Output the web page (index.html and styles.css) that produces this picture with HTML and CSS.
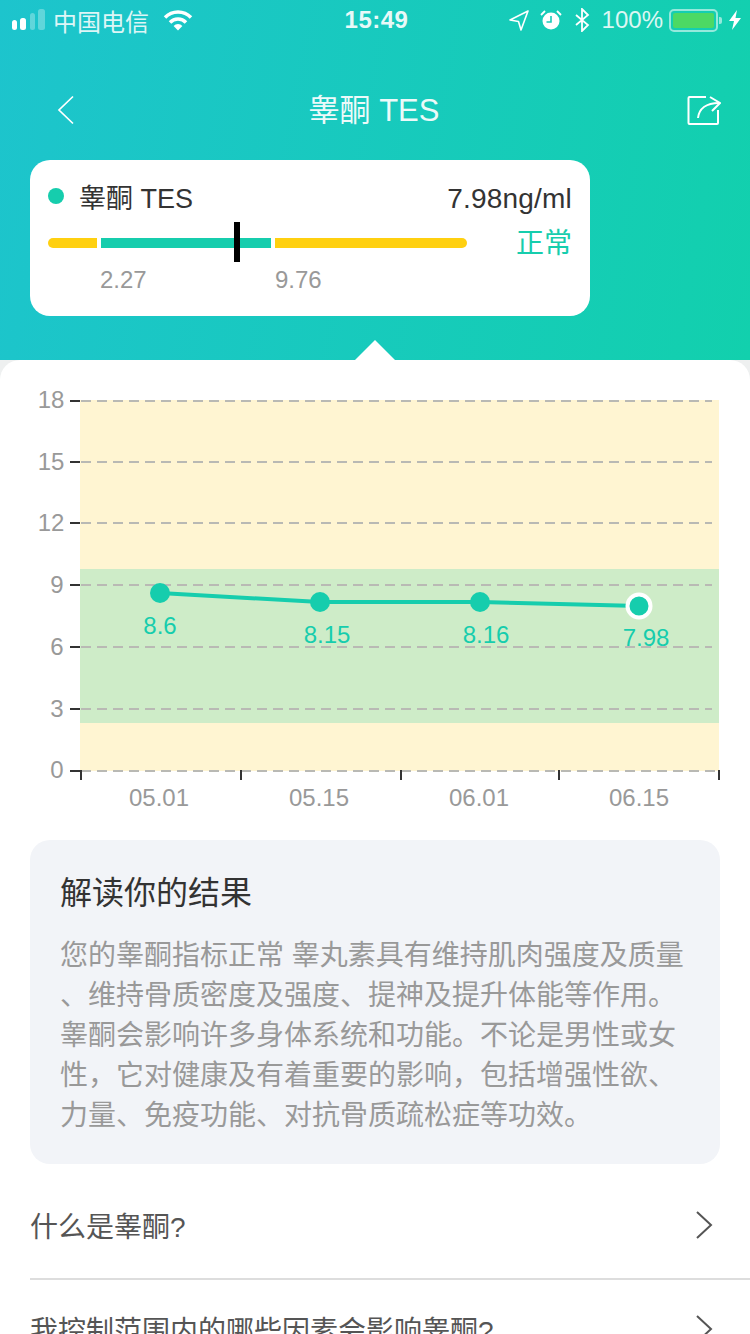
FILE: index.html
```html
<!DOCTYPE html>
<html lang="zh-CN">
<head>
    <meta charset="UTF-8">
    <title>睾酮 TES</title>
    <link rel="stylesheet" href="styles.css">
</head>
<body>
    <div class="page">
        <header class="top">
            <div class="status-bar">
                <div class="status-left">
                    <svg class="signal" width="34" height="24" viewBox="0 0 34 24">
                        <rect x="0" y="12" width="5" height="10" rx="2.5" fill="#fff"/>
                        <rect x="8" y="10" width="6" height="12" rx="2.5" fill="#fff"/>
                        <rect x="18" y="5" width="5" height="17" rx="2.5" fill="#fff" opacity=".3"/>
                        <rect x="26" y="1" width="7" height="21" rx="2.5" fill="#fff" opacity=".3"/>
                    </svg>
                    <span class="carrier">中国电信</span>
                    <svg class="wifi" width="30" height="22" viewBox="0 0 30 22">
                        <path d="M2 8.500a18 18 0 0 1 26 0" fill="none" stroke="#fff" stroke-width="3.4"/>
                        <path d="M7 13.500a11 11 0 0 1 16 0" fill="none" stroke="#fff" stroke-width="3.4"/>
                        <path d="M10.600 17a6 6 0 0 1 8.800 0L15 21.500z" fill="#fff"/>
                    </svg>
                </div>
                <span class="clock">15:49</span>
                <div class="status-right">
                    <svg width="20" height="22" viewBox="0 0 20 22">
                        <path d="M19 2 1 11l8.500 1.500L12 21z" fill="none" stroke="#fff" stroke-width="1.6" stroke-linejoin="round"/>
                    </svg>
                    <svg class="alarm" width="22" height="22" viewBox="0 0 22 22">
                        <circle cx="11" cy="12" r="8.500" fill="#fff"/>
                        <path d="M11 7v6H6.500" fill="none" stroke="#17cbb9" stroke-width="1.6"/>
                        <path d="M1 6l4-4M21 6l-4-4" stroke="#fff" stroke-width="1.8"/>
                    </svg>
                    <svg class="bluetooth" width="16" height="24" viewBox="0 0 16 24">
                        <path d="M2 7l12 10-6 6V1l6 6L2 17" fill="none" stroke="#fff" stroke-width="1.8"/>
                    </svg>
                    <span class="battery-text">100%</span>
                    <div class="battery"><div class="battery-fill"></div></div>
                    <div class="battery-tip"></div>
                    <svg width="12" height="20" viewBox="0 0 12 20">
                        <path d="M8 0 0 11h5l-2 9 9-12H6.500z" fill="#fff"/>
                    </svg>
                </div>
            </div>

            <nav class="nav">
                <svg class="nav-back" width="18" height="30" viewBox="0 0 18 30">
                    <path d="M16 1.500 2 15l14 13.500" fill="none" stroke="#fff" stroke-width="1.7"/>
                </svg>
                <h1 class="nav-title">睾酮 TES</h1>
                <svg class="nav-share" width="34" height="32" viewBox="0 0 34 32">
                    <path d="M19 3H2.500a1 1 0 0 0-1 1v25a1 1 0 0 0 1 1H30a1 1 0 0 0 1-1V16" fill="none" stroke="#fff" stroke-width="2"/>
                    <path d="M11 24c1-9 8-15 21-15" fill="none" stroke="#fff" stroke-width="2"/>
                    <path d="M23 3l10 6-8 8" fill="none" stroke="#fff" stroke-width="2"/>
                </svg>
            </nav>

            <section class="summary">
                <div class="summary-head">
                    <span class="dot"></span>
                    <span class="summary-name">睾酮 TES</span>
                    <span class="summary-value">7.98ng/ml</span>
                </div>
                <div class="summary-range">
                    <div class="range">
                        <div class="range-bar">
                            <span class="seg seg-low"></span>
                            <span class="seg seg-mid"></span>
                            <span class="seg seg-high"></span>
                            <span class="range-mark"></span>
                        </div>
                        <div class="range-labels">
                            <span class="range-low">2.27</span>
                            <span class="range-high">9.76</span>
                        </div>
                    </div>
                    <span class="summary-state">正常</span>
                </div>
            </section>
        </header>

        <main class="sheet">
            <span class="sheet-caret"></span>

            <svg class="chart" width="750" height="440" viewBox="0 380 750 440">
                <!-- bands -->
                <rect x="80" y="400" width="639" height="371" fill="#fff5d2"/>
                <rect x="80" y="569" width="639" height="154" fill="#ceecc8"/>

                <!-- grid -->
                <g stroke="#b9b9b4" stroke-width="2" stroke-dasharray="10 6">
                    <path d="M81 401H712M81 462H712M81 523H712M81 585H712M81 647H712M81 709H712M81 771H719"/>
                </g>

                <!-- axis ticks -->
                <g stroke="#333" stroke-width="2">
                    <path d="M70 401H80M70 462H80M70 523H80M70 585H80M70 647H80M70 709H80M70 771H81"/>
                    <path d="M81 770V780M241 770V780M401 770V780M559 770V780M719 770V780"/>
                </g>

                <g class="axis-y" text-anchor="middle">
                    <text x="51" y="408">18</text>
                    <text x="51" y="470">15</text>
                    <text x="51" y="531">12</text>
                    <text x="57" y="593">9</text>
                    <text x="57" y="655">6</text>
                    <text x="57" y="717">3</text>
                    <text x="57" y="778">0</text>
                </g>
                <g class="axis-x" text-anchor="middle">
                    <text x="159" y="806">05.01</text>
                    <text x="319" y="806">05.15</text>
                    <text x="479" y="806">06.01</text>
                    <text x="639" y="806">06.15</text>
                </g>

                <!-- values -->
                <polyline points="160,593 320,602 480,602 640,606" fill="none" stroke="#16cdad" stroke-width="4"/>
                <circle cx="160" cy="593" r="10" fill="#16cdad"/>
                <circle cx="320" cy="602" r="10" fill="#16cdad"/>
                <circle cx="480" cy="602" r="10" fill="#16cdad"/>
                <circle cx="639" cy="606" r="11.500" fill="#16cdad" stroke="#fff" stroke-width="4"/>
                <g class="point-label" text-anchor="middle">
                    <text x="160" y="634">8.6</text>
                    <text x="327" y="643">8.15</text>
                    <text x="486" y="643">8.16</text>
                    <text x="646" y="646">7.98</text>
                </g>
            </svg>

            <section class="reading">
                <h2 class="reading-title">解读你的结果</h2>
                <p class="reading-line">您的睾酮指标正常 睾丸素具有维持肌肉强度及质量</p>
                <p class="reading-line">、维持骨质密度及强度、提神及提升体能等作用。</p>
                <p class="reading-line">睾酮会影响许多身体系统和功能。不论是男性或女</p>
                <p class="reading-line">性，它对健康及有着重要的影响，包括增强性欲、</p>
                <p class="reading-line">力量、免疫功能、对抗骨质疏松症等功效。</p>
            </section>

            <ul class="faq">
                <li class="faq-item">
                    <span>什么是睾酮?</span>
                    <svg width="18" height="28" viewBox="0 0 18 28"><path d="M2 1l14 13L2 27" fill="none" stroke="#555" stroke-width="2"/></svg>
                </li>
                <li class="faq-item">
                    <span>我控制范围内的哪些因素会影响睾酮?</span>
                    <svg width="18" height="28" viewBox="0 0 18 28"><path d="M2 1l14 13L2 27" fill="none" stroke="#555" stroke-width="2"/></svg>
                </li>
            </ul>
        </main>
    </div>
</body>
</html>
```

FILE: styles.css
```css
* {
    margin: 0;
    padding: 0;
    box-sizing: border-box;
}

body {
    font-family: "Liberation Sans", "Noto Sans CJK SC", sans-serif;
    background: #fff;
}

.page {
    width: 750px;
    height: 1334px;
    overflow: hidden;
    background: #eef0f0;
}

/* gradient header */
.top {
    height: 360px;
    background: linear-gradient(100deg, #1dc4cd, #12d0ad);
    color: #fff;
}

.status-bar {
    height: 40px;
    padding: 0 9px 0 12px;
    display: grid;
    grid-template-columns: 1fr auto 1fr;
    align-items: center;
}

.status-left,
.status-right {
    display: flex;
    align-items: center;
}

.status-right {
    justify-content: flex-end;
}

.carrier {
    margin: 0 14px 0 7px;
    font-size: 24px;
    opacity: .85;
}

.clock {
    font-size: 24px;
    font-weight: bold;
    letter-spacing: .5px;
    opacity: .9;
}

.alarm {
    margin-left: 11px;
}

.bluetooth {
    margin-left: 12px;
}

.battery-text {
    margin-left: 12px;
    font-size: 24px;
    opacity: .85;
}

.battery {
    width: 49px;
    height: 23px;
    margin-left: 6px;
    padding: 2px;
    border: 2px solid rgba(255, 255, 255, .55);
    border-radius: 5px;
}

.battery-fill {
    height: 100%;
    background: #4cd964;
    border-radius: 2px;
}

.battery-tip {
    width: 3px;
    height: 7px;
    margin: 0 7px 0 1px;
    background: rgba(255, 255, 255, .55);
    border-radius: 0 2px 2px 0;
}

.nav {
    height: 72px;
    margin-top: 34px;
    padding: 0 29px 0 57px;
    display: grid;
    grid-template-columns: 1fr auto 1fr;
    align-items: center;
}

.nav-share {
    justify-self: end;
}

.nav-title {
    margin-left: -14px;
    font-size: 31px;
    line-height: 40px;
    font-weight: normal;
    opacity: .92;
    transform: translate(-8px, 1px);
}

/* result card */
.summary {
    width: 560px;
    height: 156px;
    margin: 14px 0 0 30px;
    padding: 18px 18px 0;
    background: #fff;
    border-radius: 20px;
    color: #333;
}

.summary-head {
    height: 40px;
    display: flex;
    align-items: center;
}

.dot {
    width: 16px;
    height: 16px;
    margin: -4px 15px 0 0;
    border-radius: 50%;
    background: #16cdad;
}

.summary-name {
    flex: 1;
    font-size: 27px;
    line-height: 36px;
    margin-top: 2px;
}

.summary-value {
    font-size: 28px;
    line-height: 36px;
    letter-spacing: .2px;
    margin-top: 1px;
}

.summary-range {
    display: flex;
    justify-content: space-between;
}

.range {
    width: 419px;
}

.range-bar {
    position: relative;
    height: 10px;
    margin-top: 20px;
    display: flex;
    gap: 4px;
}

.seg {
    height: 10px;
}

.seg-low {
    width: 49px;
    background: #ffd010;
    border-radius: 5px 0 0 5px;
}

.seg-mid {
    width: 170px;
    background: #16cdad;
}

.seg-high {
    flex: 1;
    background: #ffd010;
    border-radius: 0 5px 5px 0;
}

.range-mark {
    position: absolute;
    left: 186px;
    top: -16px;
    width: 6px;
    height: 40px;
    background: #000;
}

.range-labels {
    margin-top: 18px;
    display: flex;
    font-size: 24px;
    color: #999;
}

.range-low {
    margin-left: 52px;
    width: 175px;
}

.summary-state {
    margin-top: 3px;
    font-size: 28px;
    color: #16cdad;
}

/* white sheet under the header */
.sheet {
    position: relative;
    height: 974px;
    padding-top: 20px;
    background: #fff;
    border-radius: 20px 20px 0 0;
}

.sheet-caret {
    position: absolute;
    left: 355px;
    top: -20px;
    border-left: 20px solid transparent;
    border-right: 20px solid transparent;
    border-bottom: 20px solid #fff;
}

.chart {
    display: block;
}

.axis-y text,
.axis-x text {
    font-size: 24px;
    fill: #999;
}

.point-label text {
    font-size: 24px;
    fill: #16cdad;
}

.reading {
    width: 690px;
    height: 324px;
    margin: 20px 0 0 30px;
    padding: 30px 30px 0;
    background: #f2f4f8;
    border-radius: 20px;
}

.reading-title {
    height: 44px;
    margin-bottom: 22px;
    font-size: 32px;
    line-height: 46px;
    font-weight: normal;
    color: #333;
}

.reading-line {
    height: 40px;
    font-size: 28px;
    line-height: 40px;
    color: #999;
    white-space: nowrap;
}

.faq {
    margin: 16px 0 0 30px;
    list-style: none;
}

.faq-item {
    height: 100px;
    padding: 0 37px 8px 0;
    display: flex;
    align-items: center;
    justify-content: space-between;
    font-size: 28px;
    color: #555;
    border-bottom: 2px solid #ddd;
}

.faq-item + .faq-item {
    padding-bottom: 0;
}
```
